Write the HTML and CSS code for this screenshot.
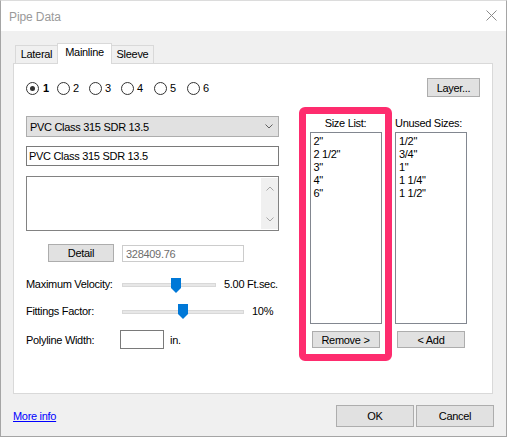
FILE: index.html
```html
<!DOCTYPE html>
<html>
<head>
<meta charset="utf-8">
<link rel="stylesheet" href="styles.css">
</head>
<body>
<div class="window">
  <div class="titlebar">
    <span class="title">Pipe Data</span>
    <svg class="close" width="11" height="11" viewBox="0 0 11 11"><path d="M0.5 0.5L10.5 10.5M10.5 0.5L0.5 10.5" stroke="#8a8a8a" stroke-width="1" fill="none"/></svg>
  </div>
  <div class="body">
    <div class="tabs">
      <div class="tab tab-lateral">Lateral</div>
      <div class="tab tab-main active">Mainline</div>
      <div class="tab tab-sleeve">Sleeve</div>
    </div>
    <div class="panel">
      <div class="toprow">
        <div class="radios">
          <div class="ritem"><span class="radio checked"></span><span class="rlabel bold">1</span></div>
          <div class="ritem"><span class="radio"></span><span class="rlabel">2</span></div>
          <div class="ritem"><span class="radio"></span><span class="rlabel">3</span></div>
          <div class="ritem"><span class="radio"></span><span class="rlabel">4</span></div>
          <div class="ritem"><span class="radio"></span><span class="rlabel">5</span></div>
          <div class="ritem"><span class="radio"></span><span class="rlabel">6</span></div>
        </div>
        <div class="btn layer">Layer...</div>
      </div>
      <div class="mainrow">
        <div class="leftcol">
          <div class="select">
            <span>PVC Class 315 SDR 13.5</span>
            <svg width="8" height="5" viewBox="0 0 8 5"><path d="M0.5 0.5L4 4L7.5 0.5" stroke="#606060" fill="none"/></svg>
          </div>
          <div class="input">PVC Class 315 SDR 13.5</div>
          <div class="textarea">
            <div class="scrollbar">
              <svg width="8" height="5" viewBox="0 0 8 5"><path d="M0.5 4.5L4 1L7.5 4.5" stroke="#a6a6a6" fill="none"/></svg>
              <svg width="8" height="5" viewBox="0 0 8 5"><path d="M0.5 0.5L4 4L7.5 0.5" stroke="#a6a6a6" fill="none"/></svg>
            </div>
          </div>
          <div class="detailrow">
            <div class="btn detail">Detail</div>
            <div class="numfield">328409.76</div>
          </div>
          <div class="srow">
            <span class="slabel">Maximum Velocity:</span>
            <div class="track track-vel">
              <svg class="thumb thumb-vel" width="10" height="15" viewBox="0 0 10 15"><path d="M0 0H10V10L5 15L0 10Z" fill="#0078d7"/></svg>
            </div>
            <span class="sval">5.00 Ft.sec.</span>
          </div>
          <div class="srow">
            <span class="slabel">Fittings Factor:</span>
            <div class="track track-fit">
              <svg class="thumb thumb-fit" width="10" height="15" viewBox="0 0 10 15"><path d="M0 0H10V10L5 15L0 10Z" fill="#0078d7"/></svg>
            </div>
            <span class="sval">10%</span>
          </div>
          <div class="prow">
            <span class="plabel">Polyline Width:</span>
            <div class="pbox"></div>
            <span class="punit">in.</span>
          </div>
        </div>
        <div class="sizebox">
          <div class="collabel center">Size List:</div>
          <div class="listbox">
            <div>2"</div>
            <div>2 1/2"</div>
            <div>3"</div>
            <div>4"</div>
            <div>6"</div>
          </div>
          <div class="btn listbtn">Remove &gt;</div>
        </div>
        <div class="unused">
          <div class="collabel">Unused Sizes:</div>
          <div class="listbox">
            <div>1/2"</div>
            <div>3/4"</div>
            <div>1"</div>
            <div>1 1/4"</div>
            <div>1 1/2"</div>
          </div>
          <div class="btn listbtn">&lt; Add</div>
        </div>
      </div>
    </div>
    <div class="footer">
      <a class="link" href="#">More info</a>
      <div class="actions">
        <div class="btn dlg">OK</div>
        <div class="btn dlg">Cancel</div>
      </div>
    </div>
  </div>
</div>
</body>
</html>
```
FILE: styles.css
```css
body {
  margin: 0;
  background: #ffffff;
  font-family: "Liberation Sans", Arial, sans-serif;
  font-size: 11px;
  letter-spacing: -0.3px;
  color: #000;
}

.window {
  width: 507px;
  height: 437px;
  box-sizing: border-box;
  border: 1px solid #a5a5a5;
  border-top-color: #dcdcdc;
  background: #f0f0f0;
  display: flex;
  flex-direction: column;
}

.titlebar {
  height: 30px;
  flex: none;
  background: #fff;
  display: flex;
  align-items: center;
  justify-content: space-between;
  padding: 0 9px 0 8px;
}

.title {
  font-size: 12px;
  letter-spacing: -0.1px;
  color: #9a9a9a;
  margin-top: 1px;
}

.close {
  margin-top: -1px;
}

.body {
  flex: 1;
  display: flex;
  flex-direction: column;
  padding: 12px 13px 0 12px;
}

.tabs {
  display: flex;
  align-items: flex-start;
  height: 21px;
  margin-bottom: -1px;
  padding-left: 2px;
}

.tab {
  margin-top: 2px;
  height: 18px;
  box-sizing: border-box;
  border: 1px solid #d9d9d9;
  border-bottom: 0;
  background: #f0f0f0;
  line-height: 17px;
  text-align: center;
}

.tab-lateral { width: 43px; }
.tab-main { width: 55px; margin-left: -1px; }
.tab-sleeve { width: 43px; margin-left: -1px; }

.tab.active {
  margin-top: 0;
  height: 21px;
  background: #fff;
  position: relative;
  z-index: 1;
  line-height: 16px;
}

.panel {
  height: 331px;
  box-sizing: border-box;
  border: 1px solid #d9d9d9;
  background: #fff;
  padding: 14px 12px 0 12px;
}

.toprow {
  display: flex;
  align-items: center;
  justify-content: space-between;
  height: 19px;
}

.radios {
  display: grid;
  grid-template-columns: 31px 32px 32px 33px 33px auto;
  align-items: center;
  margin-top: 1px;
}

.ritem {
  display: flex;
  align-items: center;
}

.radio {
  width: 13px;
  height: 13px;
  box-sizing: border-box;
  border: 1px solid #333;
  border-radius: 50%;
  position: relative;
  background: #fff;
}

.radio.checked::after {
  content: "";
  position: absolute;
  left: 3px;
  top: 3px;
  width: 5px;
  height: 5px;
  border-radius: 50%;
  background: #333;
}

.rlabel {
  margin-left: 3px;
}

.bold {
  font-weight: bold;
  margin-left: 4px;
}

.btn {
  box-sizing: border-box;
  border: 1px solid #adadad;
  background: #e1e1e1;
  display: flex;
  align-items: center;
  justify-content: center;
}

.layer {
  width: 53px;
  height: 19px;
}

.mainrow {
  display: flex;
  align-items: flex-start;
  margin-top: 10px;
}

.leftcol {
  width: 253px;
  margin-top: 9px;
  display: flex;
  flex-direction: column;
}

.select {
  height: 21px;
  box-sizing: border-box;
  border: 1px solid #adadad;
  background: #e1e1e1;
  display: flex;
  align-items: center;
  justify-content: space-between;
  padding: 0 5px 0 3px;
}

.input {
  margin-top: 9px;
  height: 20px;
  box-sizing: border-box;
  border: 1px solid #7a7a7a;
  padding-left: 2px;
  display: flex;
  align-items: center;
}

.textarea {
  margin-top: 10px;
  height: 55px;
  box-sizing: border-box;
  border: 1px solid #828282;
  display: flex;
  justify-content: flex-end;
  padding: 1px 0;
}

.scrollbar {
  width: 17px;
  background: #f0f0f0;
  display: flex;
  flex-direction: column;
  align-items: center;
  justify-content: space-between;
  padding: 8px 0 7px;
}

.detailrow {
  margin-top: 13px;
  display: flex;
  align-items: flex-start;
  height: 18px;
}

.detail {
  margin-left: 22px;
  width: 66px;
  height: 18px;
}

.numfield {
  margin-left: 8px;
  margin-top: 1px;
  width: 122px;
  height: 17px;
  box-sizing: border-box;
  border: 1px solid #cccccc;
  color: #6d6d6d;
  padding-left: 3px;
  display: flex;
  align-items: center;
}

.srow {
  height: 16px;
  display: flex;
  align-items: center;
  margin-top: 14px;
}

.srow + .srow {
  margin-top: 11px;
}

.slabel {
  width: 96px;
  flex: none;
}

.track {
  height: 4px;
  box-sizing: border-box;
  border: 1px solid #d8d8d8;
  background: #e7e7e7;
  position: relative;
  margin-top: 1px;
}

.track-vel { width: 94px; }
.track-fit { width: 122px; }

.thumb {
  position: absolute;
  top: -6px;
}

.thumb-vel { left: 48px; }
.thumb-fit { left: 55px; top: -7px; }

.sval {
  margin-left: 8px;
}

.prow {
  margin-top: 11px;
  height: 19px;
  display: flex;
  align-items: center;
}

.plabel {
  width: 94px;
  flex: none;
}

.pbox {
  width: 44px;
  height: 19px;
  box-sizing: border-box;
  border: 1px solid #7a7a7a;
}

.punit {
  margin-left: 6px;
}

.sizebox {
  margin-left: 20px;
  width: 93px;
  height: 254px;
  box-sizing: border-box;
  border: 7px solid #fe2c6e;
  border-radius: 6px;
  background: #fff;
  display: flex;
  flex-direction: column;
  align-items: center;
}

.unused {
  margin-left: 3px;
  width: 72px;
  padding-top: 7px;
  display: flex;
  flex-direction: column;
  align-items: center;
}

.collabel {
  height: 18px;
  line-height: 18px;
  align-self: stretch;
}

.collabel.center {
  text-align: center;
}

.listbox {
  width: 72px;
  height: 192px;
  box-sizing: border-box;
  border: 1px solid #828790;
  padding: 2px 3px;
  line-height: 13px;
  background: #fff;
}

.listbtn {
  margin-top: 7px;
  width: 68px;
  height: 17px;
}

.footer {
  flex: 1;
  display: flex;
  align-items: center;
  justify-content: space-between;
  padding-top: 2px;
}

.link {
  color: #0000ff;
  text-decoration: underline;
}

.actions {
  display: flex;
  gap: 2px;
  margin-right: -1px;
}

.dlg {
  width: 78px;
  height: 22px;
}
```
